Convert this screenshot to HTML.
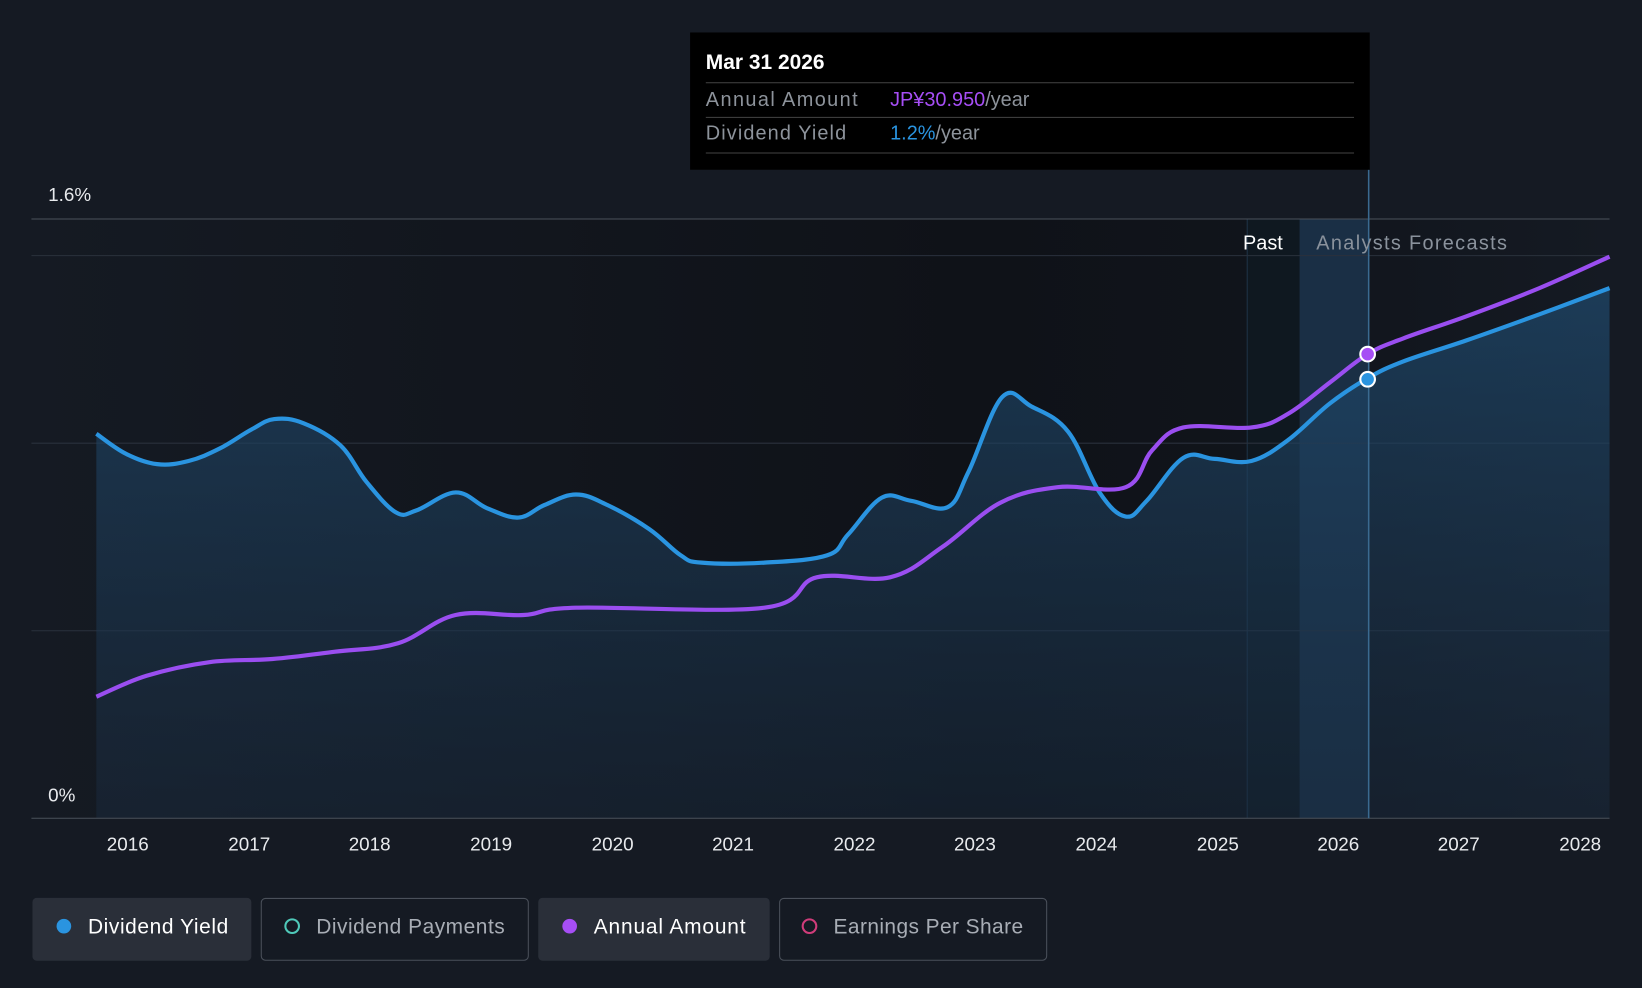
<!DOCTYPE html>
<html><head><meta charset="utf-8"><style>
html,body{margin:0;padding:0;background:#151a23;}
svg{display:block}
text{font-family:"Liberation Sans",sans-serif}
</style></head><body>
<svg id="s" width="1642" height="988" viewBox="0 0 1568 943" preserveAspectRatio="none" xmlns="http://www.w3.org/2000/svg">
<defs>
<linearGradient id="ar" x1="0" y1="0" x2="0" y2="1">
<stop offset="0" stop-color="#1f4a6e" stop-opacity="0.7"/>
<stop offset="1" stop-color="#1a2c40" stop-opacity="0.45"/>
</linearGradient>
<linearGradient id="bg" x1="0" y1="0" x2="1" y2="0">
<stop offset="0" stop-color="#151a23"/>
<stop offset="0.6" stop-color="#0f1218"/>
<stop offset="0.78" stop-color="#10141b"/>
<stop offset="1" stop-color="#151a23"/>
</linearGradient>
</defs>
<rect width="1568" height="943" fill="#151a23"/>
<rect x="30" y="209" width="1507" height="572" fill="url(#bg)"/>
<rect x="1191" y="209" width="50" height="572" fill="#0f1820"/>
<rect x="1241" y="209" width="66" height="572" fill="#1a2f45"/>
<line x1="1191" y1="209" x2="1191" y2="781" stroke="#1f3347"/>
<g stroke="#2a313c" stroke-width="1">
<line x1="30" y1="209" x2="1537" y2="209" stroke="#4a515b"/>
<line x1="30" y1="244" x2="1537" y2="244"/>
<line x1="30" y1="423" x2="1537" y2="423"/>
<line x1="30" y1="602" x2="1537" y2="602"/>
</g>
<path id="area" fill="url(#ar)"/>
<line x1="30" y1="781" x2="1537" y2="781" stroke="#4a515b"/>
<line x1="1307" y1="162" x2="1307" y2="781" stroke="#3a6a90" stroke-width="1.5"/>
<path id="bl" fill="none" stroke="#2a94e0" stroke-width="4" stroke-linejoin="round"/>
<path id="pl" fill="none" stroke="#9a4ef0" stroke-width="4" stroke-linejoin="round"/>
<circle cx="1306" cy="338" r="7" fill="#a64ef5" stroke="#fff" stroke-width="2"/>
<circle cx="1306" cy="362" r="7" fill="#2a94e0" stroke="#fff" stroke-width="2"/>
<text x="46" y="192" fill="#e8eaed" font-size="18">1.6%</text>
<text x="46" y="765" fill="#e8eaed" font-size="18">0%</text>
<text x="1225" y="238" fill="#fff" font-size="19" text-anchor="end">Past</text>
<text x="1257" y="238" fill="#8a929c" font-size="19" textLength="182">Analysts Forecasts</text>
<g fill="#e8eaed" font-size="18" text-anchor="middle">
<text x="122" y="812">2016</text><text x="238" y="812">2017</text><text x="353" y="812">2018</text><text x="469" y="812">2019</text><text x="585" y="812">2020</text><text x="700" y="812">2021</text><text x="816" y="812">2022</text><text x="931" y="812">2023</text><text x="1047" y="812">2024</text><text x="1163" y="812">2025</text><text x="1278" y="812">2026</text><text x="1393" y="812">2027</text><text x="1509" y="812">2028</text>
</g>
<rect x="659" y="31" width="649" height="131" fill="#000"/>
<text x="674" y="66" fill="#fff" font-size="20" font-weight="bold">Mar 31 2026</text>
<line x1="674" y1="79" x2="1293" y2="79" stroke="#444"/>
<text x="674" y="101" fill="#8d939b" font-size="19" textLength="145">Annual Amount</text>
<text x="850" y="101" font-size="19"><tspan fill="#a64ef5">JP¥30.950</tspan><tspan fill="#8d939b">/year</tspan></text>
<line x1="674" y1="112" x2="1293" y2="112" stroke="#444"/>
<text x="674" y="133" fill="#8d939b" font-size="19" textLength="134">Dividend Yield</text>
<text x="850" y="133" font-size="19"><tspan fill="#2a94e0">1.2%</tspan><tspan fill="#8d939b">/year</tspan></text>
<line x1="674" y1="146" x2="1293" y2="146" stroke="#444"/>
<rect x="31" y="857" width="209" height="60" rx="4" fill="#2a2f39"/>
<circle cx="61" cy="884" r="7" fill="#2a94e0"/>
<text x="84" y="891" fill="#fff" font-size="20" textLength="134">Dividend Yield</text>
<rect x="249.5" y="857.5" width="255" height="59" rx="4" fill="none" stroke="#4a505a"/>
<circle cx="279" cy="884" r="6.5" fill="none" stroke="#4fc9b9" stroke-width="2"/>
<text x="302" y="891" fill="#a8adb5" font-size="20" textLength="180">Dividend Payments</text>
<rect x="514" y="857" width="221" height="60" rx="4" fill="#2a2f39"/>
<circle cx="544" cy="884" r="7" fill="#a64ef5"/>
<text x="567" y="891" fill="#fff" font-size="20" textLength="145">Annual Amount</text>
<rect x="744.5" y="857.5" width="255" height="59" rx="4" fill="none" stroke="#4a505a"/>
<circle cx="773" cy="884" r="6.5" fill="none" stroke="#d03c7a" stroke-width="2"/>
<text x="796" y="891" fill="#a8adb5" font-size="20" textLength="181">Earnings Per Share</text>
</svg>
<script>
function cr(p){var d="M"+p[0][0]+","+p[0][1];for(var i=0;i<p.length-1;i++){var a=p[i-1]||p[i],b=p[i],c=p[i+1],e=p[i+2]||c;var t=0.18;d+=" C"+(b[0]+(c[0]-a[0])*t).toFixed(1)+","+(b[1]+(c[1]-a[1])*t).toFixed(1)+" "+(c[0]-(e[0]-b[0])*t).toFixed(1)+","+(c[1]-(e[1]-b[1])*t).toFixed(1)+" "+c[0]+","+c[1];}return d;}
var B=[[92,414],[120,433],[150,443],[180,440],[210,428],[240,410],[262,400],[290,404],[325,425],[350,460],[378,489],[398,487],[435,470],[465,485],[495,494],[520,482],[550,472],[580,482],[620,505],[650,530],[670,537],[730,537],[790,530],[810,510],[842,475],[870,478],[905,484],[925,450],[957,379],[985,388],[1020,412],[1050,470],[1075,493],[1095,478],[1130,437],[1160,438],[1195,440],[1230,420],[1270,385],[1306,361],[1340,345],[1400,325],[1470,300],[1537,275]];
var P=[[92,665],[140,645],[200,632],[260,629],[320,622],[380,614],[435,587],[500,587],[550,580],[730,580],[780,551],[850,551],[900,522],[955,480],[1010,465],[1075,465],[1100,430],[1130,408],[1195,408],[1230,395],[1270,365],[1306,338],[1340,323],[1400,302],[1470,275],[1537,245]];
var db=cr(B);
document.getElementById("bl").setAttribute("d",db);
document.getElementById("pl").setAttribute("d",cr(P));
document.getElementById("area").setAttribute("d",db+" L1537,781 L92,781 Z");
</script>
</body></html>
